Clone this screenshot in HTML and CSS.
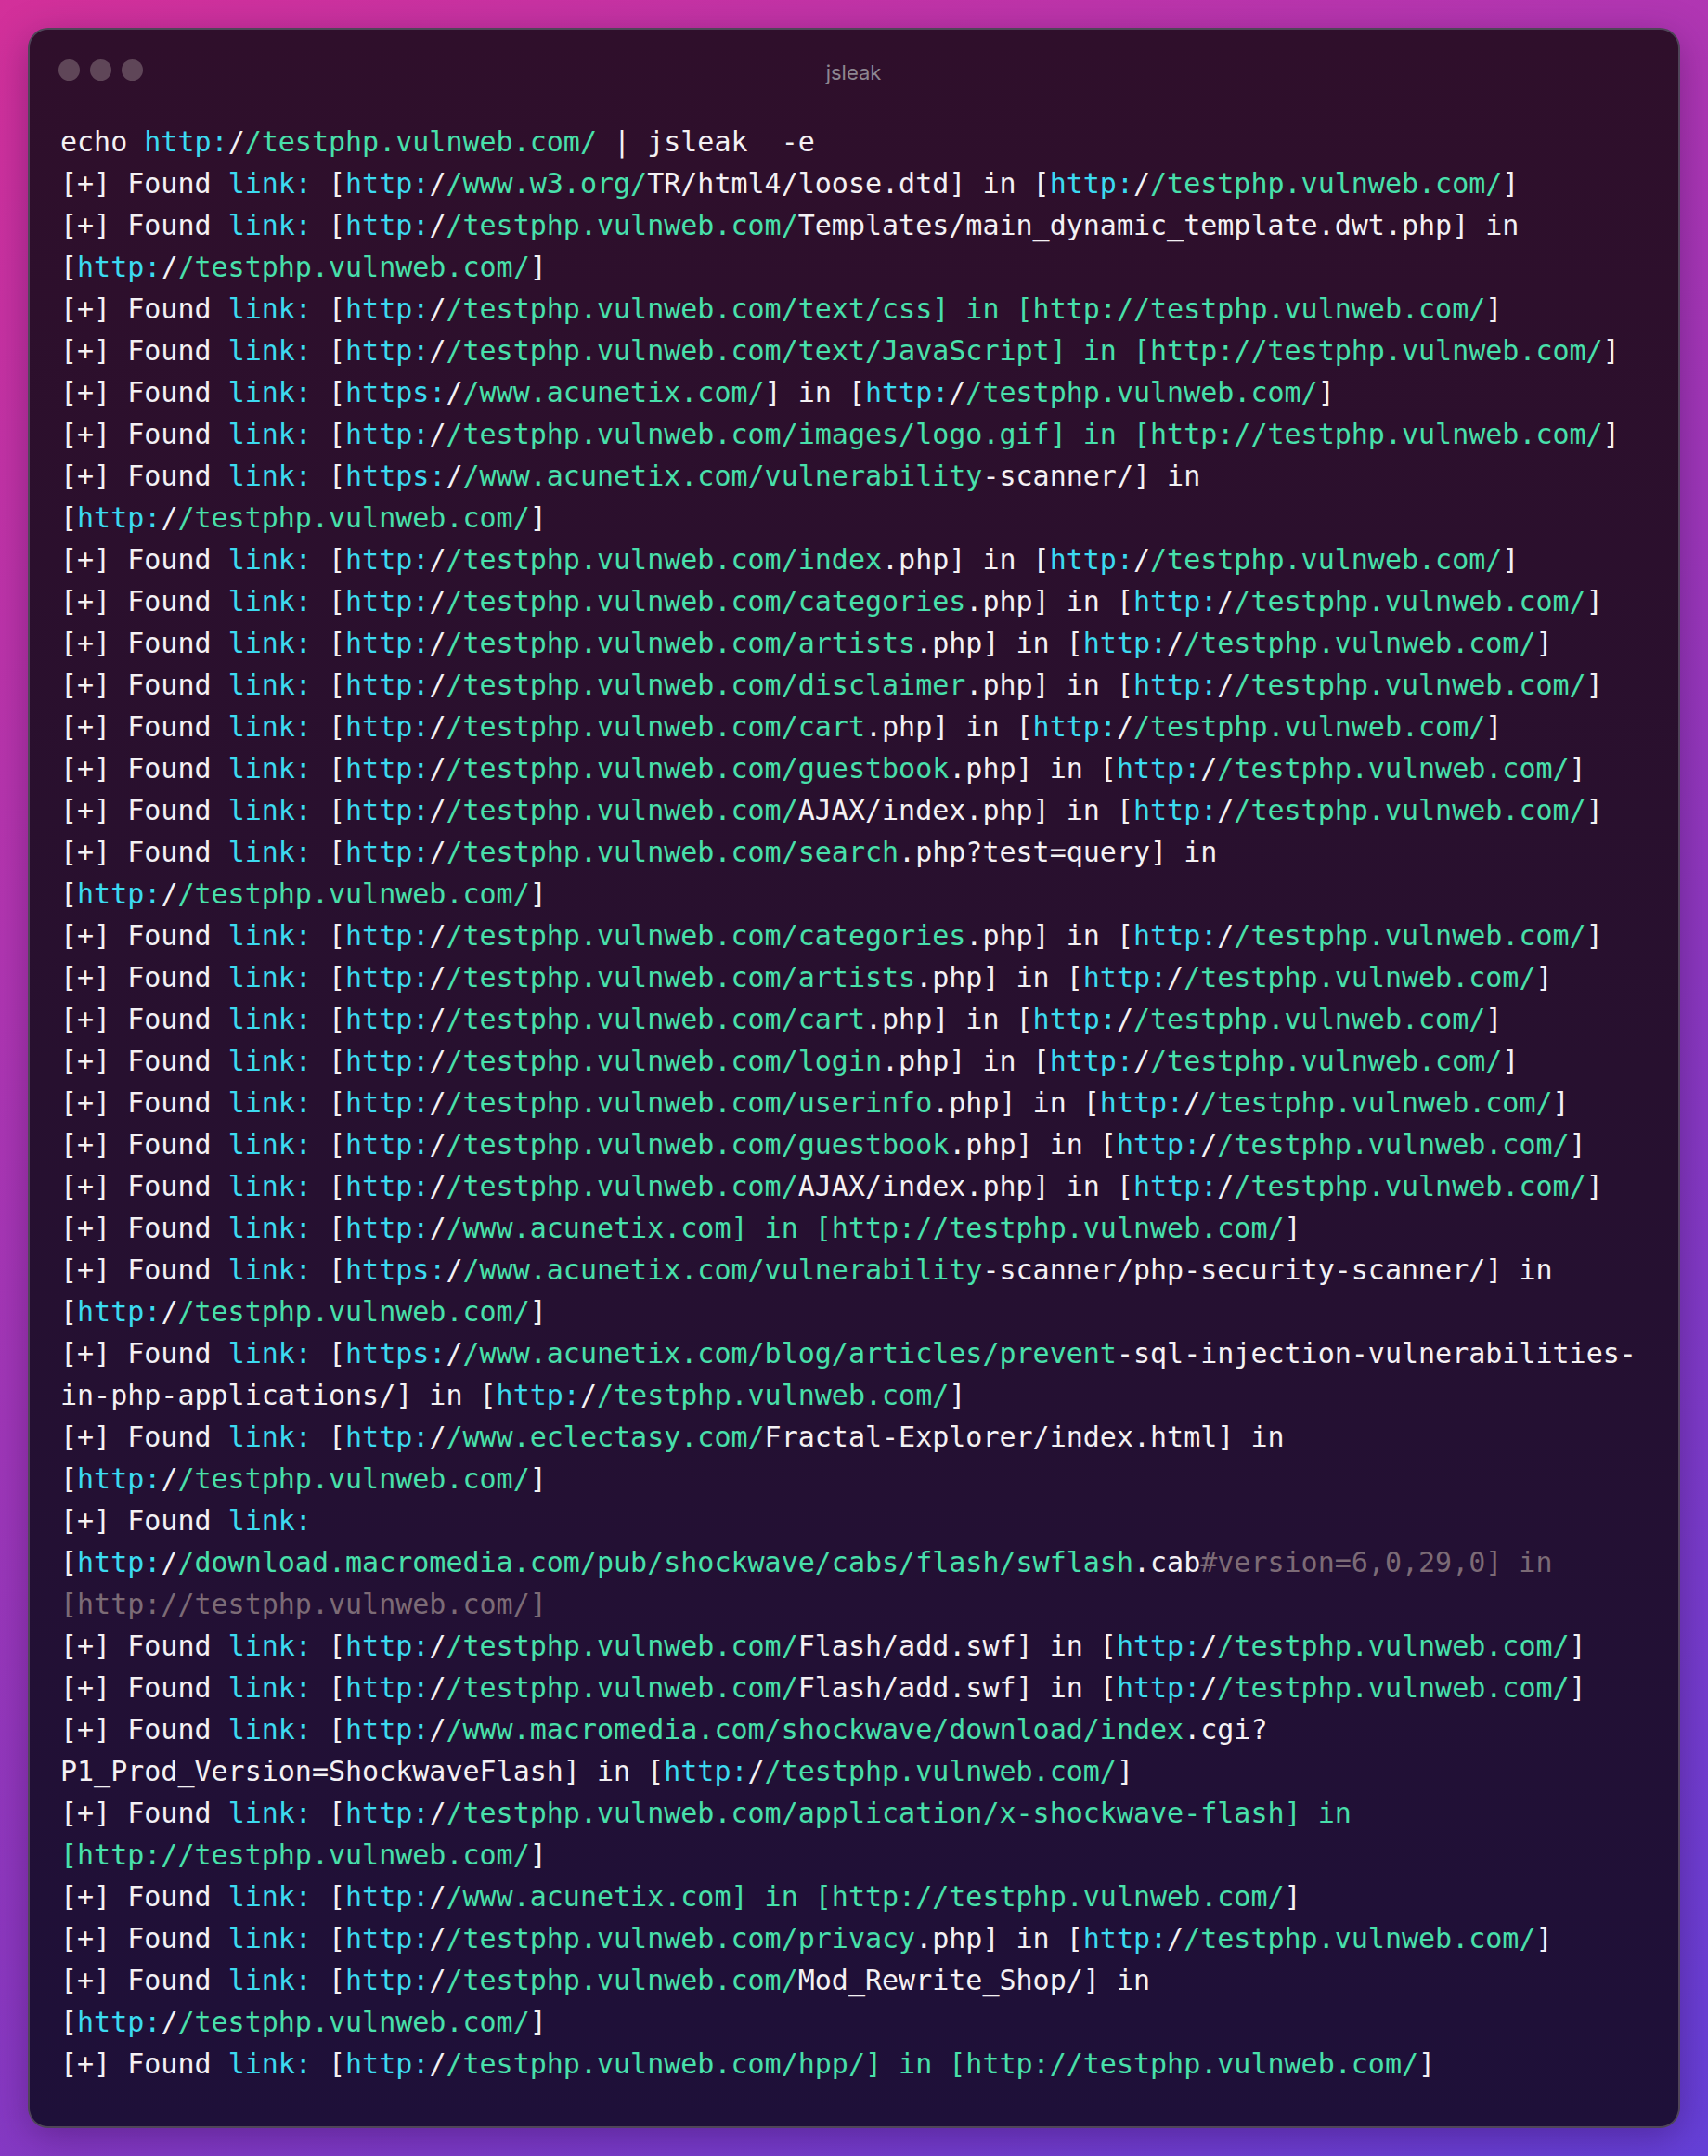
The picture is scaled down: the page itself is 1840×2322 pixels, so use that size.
FILE: index.html
```html
<!DOCTYPE html>
<html lang="en">
<head>
<meta charset="utf-8">
<title>jsleak</title>
<link rel="stylesheet" href="styles.css">
</head>
<body>
<div class="window">
  <div class="titlebar">
    <div class="dots"><span class="dot"></span><span class="dot"></span><span class="dot"></span></div>
    <div class="title">jsleak</div>
    <div class="spacer"></div>
  </div>
  <div class="term">
<div class="ln">echo <span class="c">http:</span>/<span class="g">/testphp.vulnweb.com/</span> | jsleak  -e</div>
<div class="ln">[+] Found <span class="c">link:</span> [<span class="c">http:</span>/<span class="g">/www.w3.org/</span>TR/html4/loose.dtd] in [<span class="c">http:</span>/<span class="g">/testphp.vulnweb.com/</span>]</div>
<div class="ln">[+] Found <span class="c">link:</span> [<span class="c">http:</span>/<span class="g">/testphp.vulnweb.com/</span>Templates/main_dynamic_template.dwt.php] in<br>[<span class="c">http:</span>/<span class="g">/testphp.vulnweb.com/</span>]</div>
<div class="ln">[+] Found <span class="c">link:</span> [<span class="c">http:</span>/<span class="g">/testphp.vulnweb.com/text/css] in [http://testphp.vulnweb.com/</span>]</div>
<div class="ln">[+] Found <span class="c">link:</span> [<span class="c">http:</span>/<span class="g">/testphp.vulnweb.com/text/JavaScript] in [http://testphp.vulnweb.com/</span>]</div>
<div class="ln">[+] Found <span class="c">link:</span> [<span class="c">https:</span>/<span class="g">/www.acunetix.com/</span>] in [<span class="c">http:</span>/<span class="g">/testphp.vulnweb.com/</span>]</div>
<div class="ln">[+] Found <span class="c">link:</span> [<span class="c">http:</span>/<span class="g">/testphp.vulnweb.com/images/logo.gif] in [http://testphp.vulnweb.com/</span>]</div>
<div class="ln">[+] Found <span class="c">link:</span> [<span class="c">https:</span>/<span class="g">/www.acunetix.com/vulnerability</span>-scanner/] in<br>[<span class="c">http:</span>/<span class="g">/testphp.vulnweb.com/</span>]</div>
<div class="ln">[+] Found <span class="c">link:</span> [<span class="c">http:</span>/<span class="g">/testphp.vulnweb.com/index</span>.php] in [<span class="c">http:</span>/<span class="g">/testphp.vulnweb.com/</span>]</div>
<div class="ln">[+] Found <span class="c">link:</span> [<span class="c">http:</span>/<span class="g">/testphp.vulnweb.com/categories</span>.php] in [<span class="c">http:</span>/<span class="g">/testphp.vulnweb.com/</span>]</div>
<div class="ln">[+] Found <span class="c">link:</span> [<span class="c">http:</span>/<span class="g">/testphp.vulnweb.com/artists</span>.php] in [<span class="c">http:</span>/<span class="g">/testphp.vulnweb.com/</span>]</div>
<div class="ln">[+] Found <span class="c">link:</span> [<span class="c">http:</span>/<span class="g">/testphp.vulnweb.com/disclaimer</span>.php] in [<span class="c">http:</span>/<span class="g">/testphp.vulnweb.com/</span>]</div>
<div class="ln">[+] Found <span class="c">link:</span> [<span class="c">http:</span>/<span class="g">/testphp.vulnweb.com/cart</span>.php] in [<span class="c">http:</span>/<span class="g">/testphp.vulnweb.com/</span>]</div>
<div class="ln">[+] Found <span class="c">link:</span> [<span class="c">http:</span>/<span class="g">/testphp.vulnweb.com/guestbook</span>.php] in [<span class="c">http:</span>/<span class="g">/testphp.vulnweb.com/</span>]</div>
<div class="ln">[+] Found <span class="c">link:</span> [<span class="c">http:</span>/<span class="g">/testphp.vulnweb.com/</span>AJAX/index.php] in [<span class="c">http:</span>/<span class="g">/testphp.vulnweb.com/</span>]</div>
<div class="ln">[+] Found <span class="c">link:</span> [<span class="c">http:</span>/<span class="g">/testphp.vulnweb.com/search</span>.php?test=query] in<br>[<span class="c">http:</span>/<span class="g">/testphp.vulnweb.com/</span>]</div>
<div class="ln">[+] Found <span class="c">link:</span> [<span class="c">http:</span>/<span class="g">/testphp.vulnweb.com/categories</span>.php] in [<span class="c">http:</span>/<span class="g">/testphp.vulnweb.com/</span>]</div>
<div class="ln">[+] Found <span class="c">link:</span> [<span class="c">http:</span>/<span class="g">/testphp.vulnweb.com/artists</span>.php] in [<span class="c">http:</span>/<span class="g">/testphp.vulnweb.com/</span>]</div>
<div class="ln">[+] Found <span class="c">link:</span> [<span class="c">http:</span>/<span class="g">/testphp.vulnweb.com/cart</span>.php] in [<span class="c">http:</span>/<span class="g">/testphp.vulnweb.com/</span>]</div>
<div class="ln">[+] Found <span class="c">link:</span> [<span class="c">http:</span>/<span class="g">/testphp.vulnweb.com/login</span>.php] in [<span class="c">http:</span>/<span class="g">/testphp.vulnweb.com/</span>]</div>
<div class="ln">[+] Found <span class="c">link:</span> [<span class="c">http:</span>/<span class="g">/testphp.vulnweb.com/userinfo</span>.php] in [<span class="c">http:</span>/<span class="g">/testphp.vulnweb.com/</span>]</div>
<div class="ln">[+] Found <span class="c">link:</span> [<span class="c">http:</span>/<span class="g">/testphp.vulnweb.com/guestbook</span>.php] in [<span class="c">http:</span>/<span class="g">/testphp.vulnweb.com/</span>]</div>
<div class="ln">[+] Found <span class="c">link:</span> [<span class="c">http:</span>/<span class="g">/testphp.vulnweb.com/</span>AJAX/index.php] in [<span class="c">http:</span>/<span class="g">/testphp.vulnweb.com/</span>]</div>
<div class="ln">[+] Found <span class="c">link:</span> [<span class="c">http:</span>/<span class="g">/www.acunetix.com] in [http://testphp.vulnweb.com/</span>]</div>
<div class="ln">[+] Found <span class="c">link:</span> [<span class="c">https:</span>/<span class="g">/www.acunetix.com/vulnerability</span>-scanner/php-security-scanner/] in<br>[<span class="c">http:</span>/<span class="g">/testphp.vulnweb.com/</span>]</div>
<div class="ln">[+] Found <span class="c">link:</span> [<span class="c">https:</span>/<span class="g">/www.acunetix.com/blog/articles/prevent</span>-sql-injection-vulnerabilities-<br>in-php-applications/] in [<span class="c">http:</span>/<span class="g">/testphp.vulnweb.com/</span>]</div>
<div class="ln">[+] Found <span class="c">link:</span> [<span class="c">http:</span>/<span class="g">/www.eclectasy.com/</span>Fractal-Explorer/index.html] in<br>[<span class="c">http:</span>/<span class="g">/testphp.vulnweb.com/</span>]</div>
<div class="ln">[+] Found <span class="c">link:</span><br>[<span class="c">http:</span>/<span class="g">/download.macromedia.com/pub/shockwave/cabs/flash/swflash</span>.cab<span class="m">#version=6,0,29,0] in</span><br><span class="m">[http://testphp.vulnweb.com/]</span></div>
<div class="ln">[+] Found <span class="c">link:</span> [<span class="c">http:</span>/<span class="g">/testphp.vulnweb.com/</span>Flash/add.swf] in [<span class="c">http:</span>/<span class="g">/testphp.vulnweb.com/</span>]</div>
<div class="ln">[+] Found <span class="c">link:</span> [<span class="c">http:</span>/<span class="g">/testphp.vulnweb.com/</span>Flash/add.swf] in [<span class="c">http:</span>/<span class="g">/testphp.vulnweb.com/</span>]</div>
<div class="ln">[+] Found <span class="c">link:</span> [<span class="c">http:</span>/<span class="g">/www.macromedia.com/shockwave/download/index</span>.cgi?<br>P1_Prod_Version=ShockwaveFlash] in [<span class="c">http:</span>/<span class="g">/testphp.vulnweb.com/</span>]</div>
<div class="ln">[+] Found <span class="c">link:</span> [<span class="c">http:</span>/<span class="g">/testphp.vulnweb.com/application/x-shockwave-flash] in</span><br><span class="g">[http://testphp.vulnweb.com/</span>]</div>
<div class="ln">[+] Found <span class="c">link:</span> [<span class="c">http:</span>/<span class="g">/www.acunetix.com] in [http://testphp.vulnweb.com/</span>]</div>
<div class="ln">[+] Found <span class="c">link:</span> [<span class="c">http:</span>/<span class="g">/testphp.vulnweb.com/privacy</span>.php] in [<span class="c">http:</span>/<span class="g">/testphp.vulnweb.com/</span>]</div>
<div class="ln">[+] Found <span class="c">link:</span> [<span class="c">http:</span>/<span class="g">/testphp.vulnweb.com/</span>Mod_Rewrite_Shop/] in<br>[<span class="c">http:</span>/<span class="g">/testphp.vulnweb.com/</span>]</div>
<div class="ln">[+] Found <span class="c">link:</span> [<span class="c">http:</span>/<span class="g">/testphp.vulnweb.com/hpp/] in [http://testphp.vulnweb.com/</span>]</div>
  </div>
</div>
</body>
</html>
```

FILE: styles.css
```css
html, body {
  margin: 0;
  padding: 0;
}

body {
  width: 1840px;
  min-height: 2322px;
  box-sizing: border-box;
  padding: 30px;
  background: linear-gradient(150deg, #d3309a 0%, #b236b2 30%, #8c38c0 62%, #6540d8 100%);
}

.window {
  border: 2px solid #4f4558;
  border-radius: 22px;
  background: linear-gradient(180deg, #2f0f2b 0%, #27102f 50%, #1e1039 100%);
  box-shadow: 0 10px 40px rgba(40, 0, 60, 0.35);
  overflow: hidden;
}

.titlebar {
  display: grid;
  grid-template-columns: 1fr auto 1fr;
  align-items: center;
  height: 98px;
  padding: 0 32px 0 31px;
  box-sizing: border-box;
}

.dots {
  display: flex;
  gap: 11px;
  align-self: start;
  padding-top: 32px;
}

.dot {
  width: 23px;
  height: 23px;
  border-radius: 50%;
  background: #5f4658;
}

.title {
  font-family: "Inter", "Noto Sans", sans-serif;
  font-size: 22px;
  color: #8d8691;
  align-self: start;
  padding-top: 33px;
}

.term {
  padding: 0 30px 45px 33px;
  font-family: "DejaVu Sans Mono", "Liberation Mono", monospace;
  font-size: 30px;
  line-height: 45px;
  color: #f4f1f4;
}

.ln {
  white-space: pre;
}

.c { color: #3cdaf0; }
.g { color: #48e0ab; }
.m { color: #7c6b76; }
```
